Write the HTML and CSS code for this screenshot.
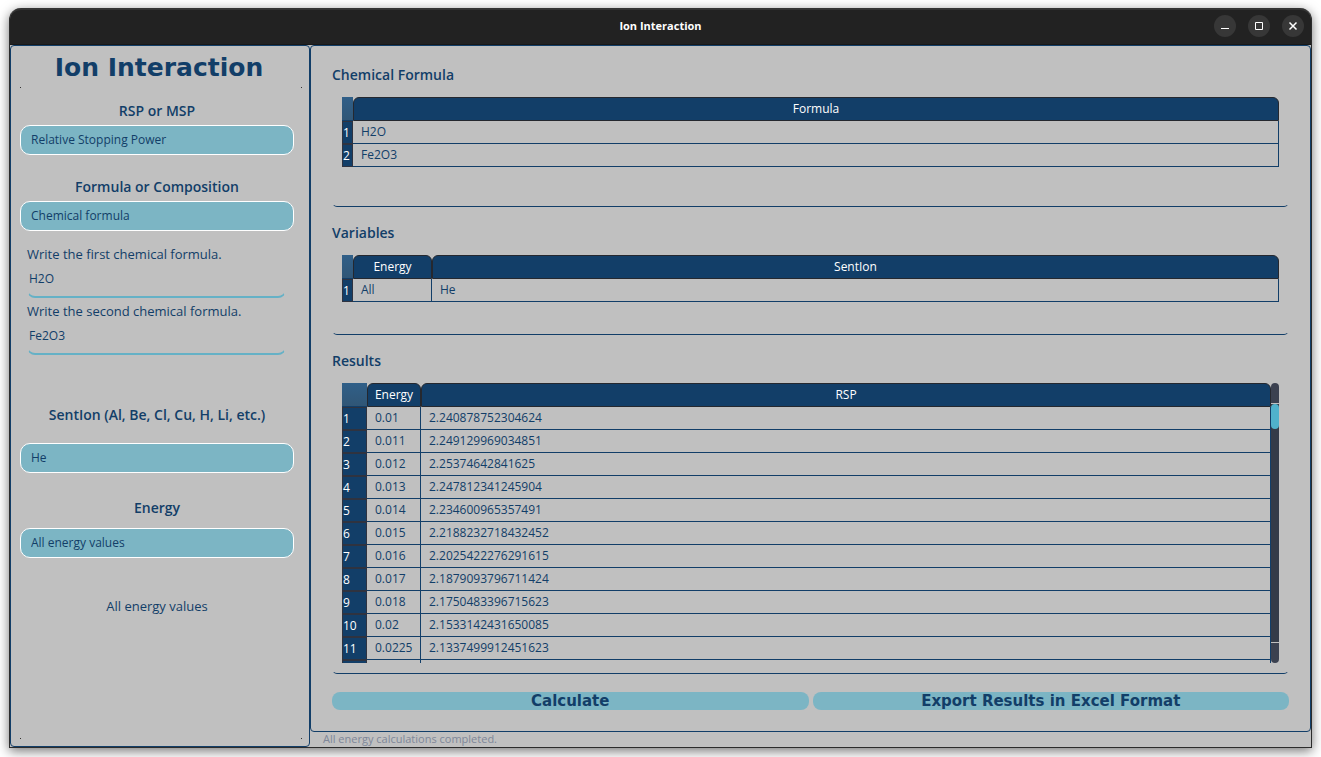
FILE: index.html
```html
<!DOCTYPE html>
<html lang="en">
<head>
<meta charset="utf-8">
<title>Ion Interaction</title>
<link rel="stylesheet" href="styles.css">
</head>
<body>
<div class="window">
  <header class="titlebar">
    <span class="titlebar-text">Ion Interaction</span>
    <div class="window-buttons">
      <button type="button" class="window-button" aria-label="Minimize"><svg viewBox="0 0 22 22"><path d="M7 13.5h8"/></svg></button>
      <button type="button" class="window-button" aria-label="Maximize"><svg viewBox="0 0 22 22"><path d="M7.5 7.5h7v7h-7z"/></svg></button>
      <button type="button" class="window-button" aria-label="Close"><svg viewBox="0 0 22 22"><path d="M7.5 7.5l7 7M14.500 7.500l-7 7" stroke-width="1.500"/></svg></button>
    </div>
  </header>
  <div class="content">
    <aside class="sidebar">
      <h1 class="app-title">Ion Interaction</h1>
      <div class="corner-marks"><i></i><i></i></div>
      <div class="fields">
        <div class="field">
          <label class="heading" for="mode">RSP or MSP</label>
          <select id="mode" class="combo"><option>Relative Stopping Power</option></select>
        </div>
        <div class="field">
          <label class="heading" for="input-kind">Formula or Composition</label>
          <select id="input-kind" class="combo"><option>Chemical formula</option></select>
        </div>
        <div class="formulas">
          <label class="hint" for="formula-1">Write the first chemical formula.</label>
          <input id="formula-1" class="line-input" type="text" value="H2O">
          <label class="hint" for="formula-2">Write the second chemical formula.</label>
          <input id="formula-2" class="line-input" type="text" value="Fe2O3">
        </div>
        <div class="field field-ion">
          <label class="heading" for="ion">SentIon (Al, Be, Cl, Cu, H, Li, etc.)</label>
          <select id="ion" class="combo"><option>He</option></select>
        </div>
        <div class="field field-energy">
          <label class="heading" for="energy">Energy</label>
          <select id="energy" class="combo"><option>All energy values</option></select>
        </div>
        <p class="energy-note">All energy values</p>
      </div>
      <div class="corner-marks corner-marks-bottom"><i></i><i></i></div>
    </aside>
    <div class="main">
      <main class="panel">
        <h2 class="heading">Chemical Formula</h2>
        <section class="frame frame-formula">
          <table class="grid">
            <colgroup><col class="col-index"><col></colgroup>
            <thead><tr><td class="corner"></td><th scope="col">Formula</th></tr></thead>
            <tbody>
              <tr><th scope="row">1</th><td>H2O</td></tr>
              <tr><th scope="row">2</th><td>Fe2O3</td></tr>
            </tbody>
          </table>
        </section>
        <h2 class="heading">Variables</h2>
        <section class="frame frame-variables">
          <table class="grid">
            <colgroup><col class="col-index"><col class="col-variable"><col></colgroup>
            <thead><tr><td class="corner"></td><th scope="col">Energy</th><th scope="col">SentIon</th></tr></thead>
            <tbody><tr><th scope="row">1</th><td>All</td><td>He</td></tr></tbody>
          </table>
        </section>
        <h2 class="heading">Results</h2>
        <section class="frame frame-results">
          <div class="results-view">
            <table class="grid">
              <colgroup><col class="col-index-wide"><col class="col-energy"><col></colgroup>
              <thead><tr><td class="corner"></td><th scope="col">Energy</th><th scope="col">RSP</th></tr></thead>
              <tbody>
                <tr><th scope="row">1</th><td>0.01</td><td>2.240878752304624</td></tr>
                <tr><th scope="row">2</th><td>0.011</td><td>2.249129969034851</td></tr>
                <tr><th scope="row">3</th><td>0.012</td><td>2.25374642841625</td></tr>
                <tr><th scope="row">4</th><td>0.013</td><td>2.247812341245904</td></tr>
                <tr><th scope="row">5</th><td>0.014</td><td>2.234600965357491</td></tr>
                <tr><th scope="row">6</th><td>0.015</td><td>2.2188232718432452</td></tr>
                <tr><th scope="row">7</th><td>0.016</td><td>2.2025422276291615</td></tr>
                <tr><th scope="row">8</th><td>0.017</td><td>2.1879093796711424</td></tr>
                <tr><th scope="row">9</th><td>0.018</td><td>2.1750483396715623</td></tr>
                <tr><th scope="row">10</th><td>0.02</td><td>2.1533142431650085</td></tr>
                <tr><th scope="row">11</th><td>0.0225</td><td>2.1337499912451623</td></tr>
                <tr><th scope="row"></th><td></td><td></td></tr>
              </tbody>
            </table>
          </div>
          <div class="scrollbar">
            <div class="scroll-end scroll-up"></div>
            <div class="scroll-track"><div class="scroll-thumb"></div></div>
            <div class="scroll-end scroll-down"></div>
          </div>
        </section>
        <div class="actions">
          <button type="button" class="action">Calculate</button>
          <button type="button" class="action">Export Results in Excel Format</button>
        </div>
      </main>
      <footer class="status">All energy calculations completed.</footer>
    </div>
  </div>
</div>
</body>
</html>
```
FILE: styles.css
```css
:root {
  --navy: #123e68;
  --teal: #7cb5c4;
  --gray: #c0c0c0;
  --ink: #25282f;
}

* { box-sizing: border-box; }

body {
  margin: 0;
  height: 100vh;
  padding: 8px 9px 9px;
  background: #fff;
  color: var(--navy);
  font: 12px/18px "Open Sans", "Noto Sans", sans-serif;
  overflow: hidden;
}

.window {
  display: flex;
  flex-direction: column;
  height: 100%;
  border: 1px solid #2c2c2c;
  border-top: 0;
  border-radius: 12px 12px 0 0;
  background: var(--gray);
  box-shadow: 0 3px 12px rgba(0, 0, 0, 0.55);
}

.titlebar {
  display: grid;
  grid-template-columns: 1fr auto 1fr;
  align-items: center;
  height: 37px;
  padding-bottom: 2px;
  border-top: 2px solid #333;
  border-bottom: 1px solid #181818;
  border-radius: 11px 11px 0 0;
  background: #222;
  color: #fff;
}

.titlebar-text {
  grid-column: 2;
  font-size: 11px;
  font-weight: 700;
}

.window-buttons {
  display: flex;
  justify-content: flex-end;
  gap: 12px;
  padding-right: 7px;
}

.window-button {
  width: 22px;
  height: 22px;
  padding: 0;
  border: 0;
  border-radius: 50%;
  background: #373737;
}

.window-button svg {
  display: block;
  width: 22px;
  height: 22px;
  fill: none;
  stroke: #fff;
}

.content {
  display: flex;
  flex: 1;
  min-height: 0;
}

.sidebar {
  display: flex;
  flex-direction: column;
  flex: 0 0 300px;
  padding: 0 7px 7px 9px;
  border: 1px solid var(--navy);
  border-radius: 4px;
}

.app-title {
  margin: 0;
  height: 41px;
  padding-right: 4px;
  text-align: center;
  font: 700 25px/44px "DejaVu Sans", sans-serif;
}

.corner-marks {
  display: flex;
  justify-content: space-between;
}

.corner-marks i {
  width: 1px;
  height: 1px;
  background: #333;
}

.corner-marks-bottom { margin-top: auto; }

.fields {
  display: flex;
  flex-direction: column;
  padding: 13px 8px 0 0;
}

.field {
  display: flex;
  flex-direction: column;
  gap: 4px;
  margin-bottom: 22px;
}

.heading {
  margin: 0;
  font-size: 14px;
  line-height: 20px;
  font-weight: 600;
}

.field .heading { text-align: center; }

.combo {
  appearance: none;
  width: 100%;
  height: 30px;
  padding: 0 10px;
  border: 1px solid #fff;
  border-radius: 10px;
  background: var(--teal);
  color: var(--navy);
  font: inherit;
}

.formulas {
  display: flex;
  flex-direction: column;
  margin: -8px 0 46px;
  padding: 0 8px 0 7px;
}

.hint {
  font-size: 13px;
  line-height: 18px;
}

.line-input {
  height: 35px;
  margin: 0 0 4px;
  padding: 0 0 3px 1px;
  border: 1px solid transparent;
  border-top: 0;
  border-bottom: 2px solid #65b1c6;
  border-radius: 0 0 8px 8px;
  background: transparent;
  color: var(--navy);
  font: inherit;
}

.field-ion { gap: 18px; margin-bottom: 25px; }
.field-energy { gap: 10px; margin-bottom: 39px; }

.energy-note {
  margin: 0;
  text-align: center;
  font-size: 13px;
}

.main {
  display: flex;
  flex-direction: column;
  flex: 1;
  min-width: 0;
}

.panel {
  display: flex;
  flex-direction: column;
  flex: 1;
  min-height: 0;
  padding: 19px 21px 21px;
  border: 1px solid var(--navy);
  border-radius: 4px;
}

.panel > .heading { margin-bottom: 2px; }

.frame {
  margin-bottom: 16px;
  padding: 9px 9px 0;
  border: 1px solid transparent;
  border-bottom-color: var(--navy);
  border-radius: 5px;
}

.frame-formula { height: 120px; }
.frame-variables { height: 90px; }

.frame-results {
  display: flex;
  flex: 1;
  min-height: 0;
  margin-bottom: 18px;
  padding-bottom: 10px;
}

.results-view {
  flex: 1;
  overflow: hidden;
}

.grid {
  width: 100%;
  table-layout: fixed;
  border-collapse: separate;
  border-spacing: 0;
}

.col-index { width: 11px; }
.col-index-wide { width: 25px; }
.col-variable { width: 79px; }
.col-energy { width: 54px; }

.grid th {
  padding: 0;
  border: 1px solid var(--ink);
  background: var(--navy);
  color: #fff;
  font-weight: 400;
}

.grid thead th {
  height: 24px;
  border-radius: 6px 6px 0 0;
}

.grid .corner {
  padding: 0;
  border: 0;
  border-bottom: 1px solid var(--navy);
  background: linear-gradient(#305f88, #305676);
}

.grid tbody th {
  height: 23px;
  border-color: #2f3340;
  text-align: left;
}

.grid td {
  padding: 0 8px;
  border-right: 1px solid var(--navy);
  border-bottom: 1px solid var(--navy);
}

.scrollbar {
  display: flex;
  flex-direction: column;
  gap: 1px;
  width: 8px;
}

.scroll-end {
  height: 20px;
  background: #3b4150;
}

.scroll-up { border-radius: 4px 4px 0 0; }
.scroll-down { border-radius: 0 0 4px 4px; }

.scroll-track {
  flex: 1;
  background: #343b48;
}

.scroll-thumb {
  height: 25px;
  border-radius: 4px;
  background: #50b2cc;
}

.actions {
  display: flex;
  gap: 4px;
}

.action {
  flex: 1 1 0;
  height: 18px;
  padding: 0;
  border: 0;
  border-radius: 8px;
  background: var(--teal);
  color: var(--navy);
  font: 700 15px/18px "DejaVu Sans", sans-serif;
}

.status {
  height: 15px;
  padding-left: 13px;
  color: #7e8799;
  font-size: 11px;
  line-height: 14px;
}
```
